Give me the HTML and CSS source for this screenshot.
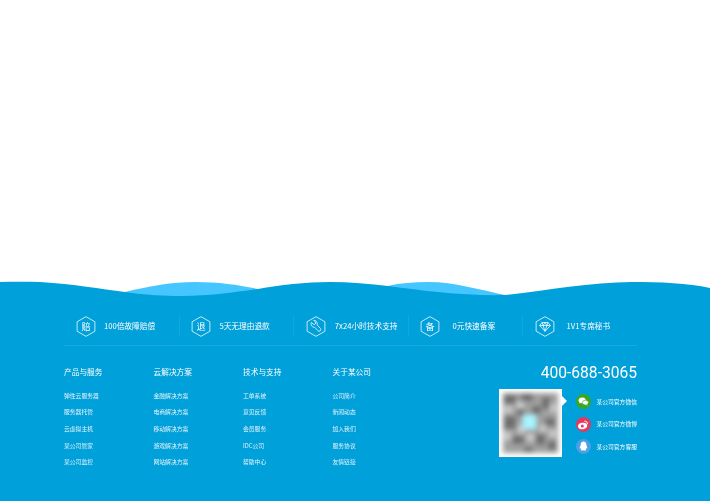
FILE: index.html
```html
<!DOCTYPE html>
<html lang="zh-CN">
<head>
<meta charset="utf-8">
<title>页脚</title>
<link rel="stylesheet" href="styles.css">
</head>
<body>
<div class="page">
  <div class="blank"></div>
  <svg class="wave" viewBox="0 0 710 16" width="710" height="16" aria-hidden="true">
    <path class="wave-light" d="M125 11 C150 5 172 1 195 1 C220 1 238 4 258 8 L258 16 L125 16 Z"/>
    <path class="wave-light" d="M388 5 C400 2 414 1 428 1 C455 1 480 9 505 14 L505 16 L388 16 Z"/>
    <path class="wave-dark" d="M0 1 C12 0.5 25 0.5 40 1 C75 3 100 8 125 11 C145 14 165 15 182 15 C210 15 235 11 258 8 C280 4 305 1 330 1 C350 1 370 3 388 5 C425 10 465 15 505 14 C545 10 590 1 632 1 C660 1 688 2 710 7 L710 16 L0 16 Z"/>
  </svg>
  <footer class="footer">
    <ul class="services">
      <li class="svc">
        <svg class="hex" viewBox="0 0 20 22"><path class="hex-line" d="M10 .7 19.3 6v10L10 21.3.7 16V6Z"/><text class="hex-text" x="10" y="14.6">赔</text></svg>
        <span class="svc-text">100倍故障赔偿</span>
      </li>
      <li class="svc">
        <svg class="hex" viewBox="0 0 20 22"><path class="hex-line" d="M10 .7 19.3 6v10L10 21.3.7 16V6Z"/><text class="hex-text" x="10" y="14.6">退</text></svg>
        <span class="svc-text">5天无理由退款</span>
      </li>
      <li class="svc">
        <svg class="hex" viewBox="0 0 20 22"><path class="hex-line" d="M10 .7 19.3 6v10L10 21.3.7 16V6Z"/><path class="hex-line" d="M7.7 4.5 9.2 6.1A1.6 1.6 0 0 1 6.9 8.4L5.2 6.8C4 9.5 6 12 8.6 11.8L12 15.4A1.7 1.7 0 0 0 14.6 13L11.2 9.4C12 6.6 10 4.2 7.7 4.5Z"/></svg>
        <span class="svc-text svc-text-wide">7x24小时技术支持</span>
      </li>
      <li class="svc">
        <svg class="hex" viewBox="0 0 20 22"><path class="hex-line" d="M10 .7 19.3 6v10L10 21.3.7 16V6Z"/><text class="hex-text" x="10" y="14.6">备</text></svg>
        <span class="svc-text">0元快速备案</span>
      </li>
      <li class="svc">
        <svg class="hex" viewBox="0 0 20 22"><path class="hex-line" d="M10 .7 19.3 6v10L10 21.3.7 16V6Z"/><path class="hex-line" d="M6.8 6.8h6.4L15.6 10 10 16 4.4 10ZM4.4 10h11.2M8 10l2 6 2-6M6.8 6.8 8 10l2-3.2L12 10l1.2-3.2"/></svg>
        <span class="svc-text">1V1专席秘书</span>
      </li>
    </ul>
    <div class="bottom">
      <nav class="links">
        <div class="col">
          <h4 class="col-title">产品与服务</h4>
          <a class="col-link">弹性云服务器</a>
          <a class="col-link">服务器托管</a>
          <a class="col-link">云虚拟主机</a>
          <a class="col-link">某公司管家</a>
          <a class="col-link">某公司监控</a>
        </div>
        <div class="col">
          <h4 class="col-title">云解决方案</h4>
          <a class="col-link">金融解决方案</a>
          <a class="col-link">电商解决方案</a>
          <a class="col-link">移动解决方案</a>
          <a class="col-link">游戏解决方案</a>
          <a class="col-link">网站解决方案</a>
        </div>
        <div class="col">
          <h4 class="col-title">技术与支持</h4>
          <a class="col-link">工单系统</a>
          <a class="col-link">意见反馈</a>
          <a class="col-link">会员服务</a>
          <a class="col-link">IDC公司</a>
          <a class="col-link">帮助中心</a>
        </div>
        <div class="col">
          <h4 class="col-title">关于某公司</h4>
          <a class="col-link">公司简介</a>
          <a class="col-link">新闻动态</a>
          <a class="col-link">加入我们</a>
          <a class="col-link">服务协议</a>
          <a class="col-link">友情链接</a>
        </div>
      </nav>
      <div class="contact">
        <div class="phone">400-688-3065</div>
        <div class="contact-row">
          <div class="qr">
            <svg class="qr-img" viewBox="0 0 63 68" width="63" height="68" aria-hidden="true">
              <defs><filter id="qrblur" x="-5%" y="-5%" width="110%" height="110%"><feGaussianBlur stdDeviation="2.8"/></filter></defs>
              <rect width="63" height="68" fill="#fff"/>
              <g filter="url(#qrblur)">
                <rect x="4" y="4" width="55" height="60" fill="#a0a0a0"/>
                <g fill="#6e6e6e">
                  <rect x="5" y="6" width="12" height="9"/><rect x="22" y="5" width="12" height="7"/><rect x="43" y="8" width="8" height="12"/>
                  <rect x="5" y="27" width="12" height="13"/><rect x="33" y="17" width="9" height="8"/><rect x="46" y="29" width="10" height="8"/>
                  <rect x="13" y="47" width="12" height="8"/><rect x="37" y="45" width="9" height="11"/><rect x="49" y="52" width="8" height="9"/>
                  <rect x="25" y="58" width="9" height="5"/><rect x="18" y="20" width="7" height="7"/>
                </g>
                <g fill="#cbcbcb">
                  <rect x="17" y="13" width="8" height="6"/><rect x="51" y="15" width="6" height="8"/><rect x="19" y="36" width="7" height="8"/>
                  <rect x="5" y="43" width="7" height="8"/><rect x="41" y="36" width="6" height="7"/><rect x="28" y="45" width="7" height="7"/>
                  <rect x="50" y="41" width="7" height="7"/><rect x="6" y="17" width="7" height="7"/>
                </g>
                <rect x="24" y="26" width="13" height="14" fill="#a8f4ff"/>
              </g>
            </svg>
            <span class="qr-arrow"></span>
          </div>
          <ul class="social">
            <li class="social-item">
              <svg class="social-icon" viewBox="0 0 15 15"><circle class="c-green" cx="7.5" cy="7.5" r="7.5"/><ellipse class="glyph" cx="6.2" cy="6.3" rx="3.6" ry="2.9"/><path class="glyph" d="M3.8 8 3.4 9.6 5.2 8.7Z"/><ellipse class="glyph-edge" cx="9.4" cy="8.6" rx="3" ry="2.4"/><path class="glyph" d="M11 10.4 11.6 11.8 10 10.8Z"/></svg>
              <span class="social-text">某公司官方微信</span>
            </li>
            <li class="social-item">
              <svg class="social-icon" viewBox="0 0 15 15"><circle class="c-pink" cx="7.5" cy="7.5" r="7.5"/><ellipse class="glyph" cx="6.6" cy="9" rx="4.6" ry="3.2" transform="rotate(-12 6.6 9)"/><circle class="c-pink" cx="6.3" cy="9.1" r="1.5"/><path class="glyph-arc" d="M8.8 4.2c1.6-.4 3 1 2.6 2.7"/></svg>
              <span class="social-text">某公司官方微博</span>
            </li>
            <li class="social-item">
              <svg class="social-icon" viewBox="0 0 15 15"><circle class="c-blue" cx="7.5" cy="7.5" r="7.5"/><path class="glyph" d="M7.5 2.6C5.6 2.6 4.7 4 4.7 5.6c0 .6-.1 1-.5 1.7-.5.9-.7 2.1-.3 2.4.2.1.5-.2.8-.6.1.6.3 1 .7 1.3-.5.2-.8.5-.7.8.2.4 2 .4 2.8.1.8.3 2.6.3 2.8-.1.1-.3-.2-.6-.7-.8.4-.3.6-.7.7-1.3.3.4.6.7.8.6.4-.3.2-1.5-.3-2.4-.4-.7-.5-1.1-.5-1.7C10.3 4 9.4 2.6 7.5 2.6Z"/></svg>
              <span class="social-text">某公司官方客服</span>
            </li>
          </ul>
        </div>
      </div>
    </div>
  </footer>
</div>
</body>
</html>
```

FILE: styles.css
```css
* { box-sizing: border-box; }
html, body { margin: 0; padding: 0; }
body {
  background: #fff;
  font-family: "Noto Sans CJK SC", "Open Sans", sans-serif;
  color: #fff;
}
.page { width: 710px; height: 501px; overflow: hidden; display: flex; flex-direction: column; }
.blank { height: 281px; flex: none; }
.wave { display: block; flex: none; }
.wave-light { fill: #45c6ff; }
.wave-dark { fill: #00a0da; }
.footer { flex: 1; background: #00a0da; padding: 19px 73px 0 64px; }

.services {
  list-style: none;
  margin: 0;
  padding: 0 0 8px;
  display: grid;
  grid-template-columns: repeat(5, 114.6px);
  border-bottom: 1px solid #19aae0;
  filter: blur(.3px);
}
.svc { display: flex; align-items: center; height: 21px; padding-left: 11.5px; border-left: 1px solid #12a7de; }
.svc:first-child { border-left: none; padding-left: 12px; }
.hex { width: 20px; height: 21px; flex: none; display: block; }
.hex-line { fill: none; stroke: #fff; stroke-width: .8; stroke-linejoin: round; }
.hex-text { font-size: 9.5px; fill: #fff; text-anchor: middle; }
.svc-text { width: 67px; margin-top: -1px; font-size: 7.7px; line-height: 12px; text-align: center; white-space: nowrap; }
.svc-text-wide { width: 81px; }

.bottom { display: flex; justify-content: space-between; filter: blur(.3px); }
.links { display: flex; padding-top: 20px; }
.col { width: 89.5px; }
.col-title { margin: 0 0 9.6px; font-size: 7.7px; line-height: 12px; font-weight: 400; }
.col-link { display: block; font-size: 5.8px; line-height: 16.7px; color: rgba(255,255,255,.9); white-space: nowrap; }

.contact { display: flex; flex-direction: column; align-items: flex-end; padding-top: 17px; }
.phone { font-family: Roboto, sans-serif; font-size: 15.6px; line-height: 20px; }
.contact-row { display: flex; margin-top: 6px; }
.qr { position: relative; width: 63px; height: 68px; }
.qr-img { display: block; }
.qr-arrow {
  position: absolute;
  left: 63px;
  top: 7px;
  border-style: solid;
  border-width: 5px 0 5px 5px;
  border-color: transparent transparent transparent #fff;
}
.social { list-style: none; margin: 0 0 0 14px; padding: 1.6px 0 0; }
.social-item { display: flex; align-items: center; height: 22.5px; }
.social-icon { width: 15px; height: 15px; flex: none; display: block; }
.social-text { margin-left: 5.8px; font-size: 5.8px; line-height: 10px; white-space: nowrap; }
.c-green { fill: #3aa81f; }
.c-pink { fill: #e23a5e; }
.c-blue { fill: #4a9fe6; }
.glyph { fill: #fff; }
.glyph-edge { fill: #fff; stroke: #3aa81f; stroke-width: .6; }
.glyph-arc { fill: none; stroke: #fff; stroke-width: 1; stroke-linecap: round; }
```
